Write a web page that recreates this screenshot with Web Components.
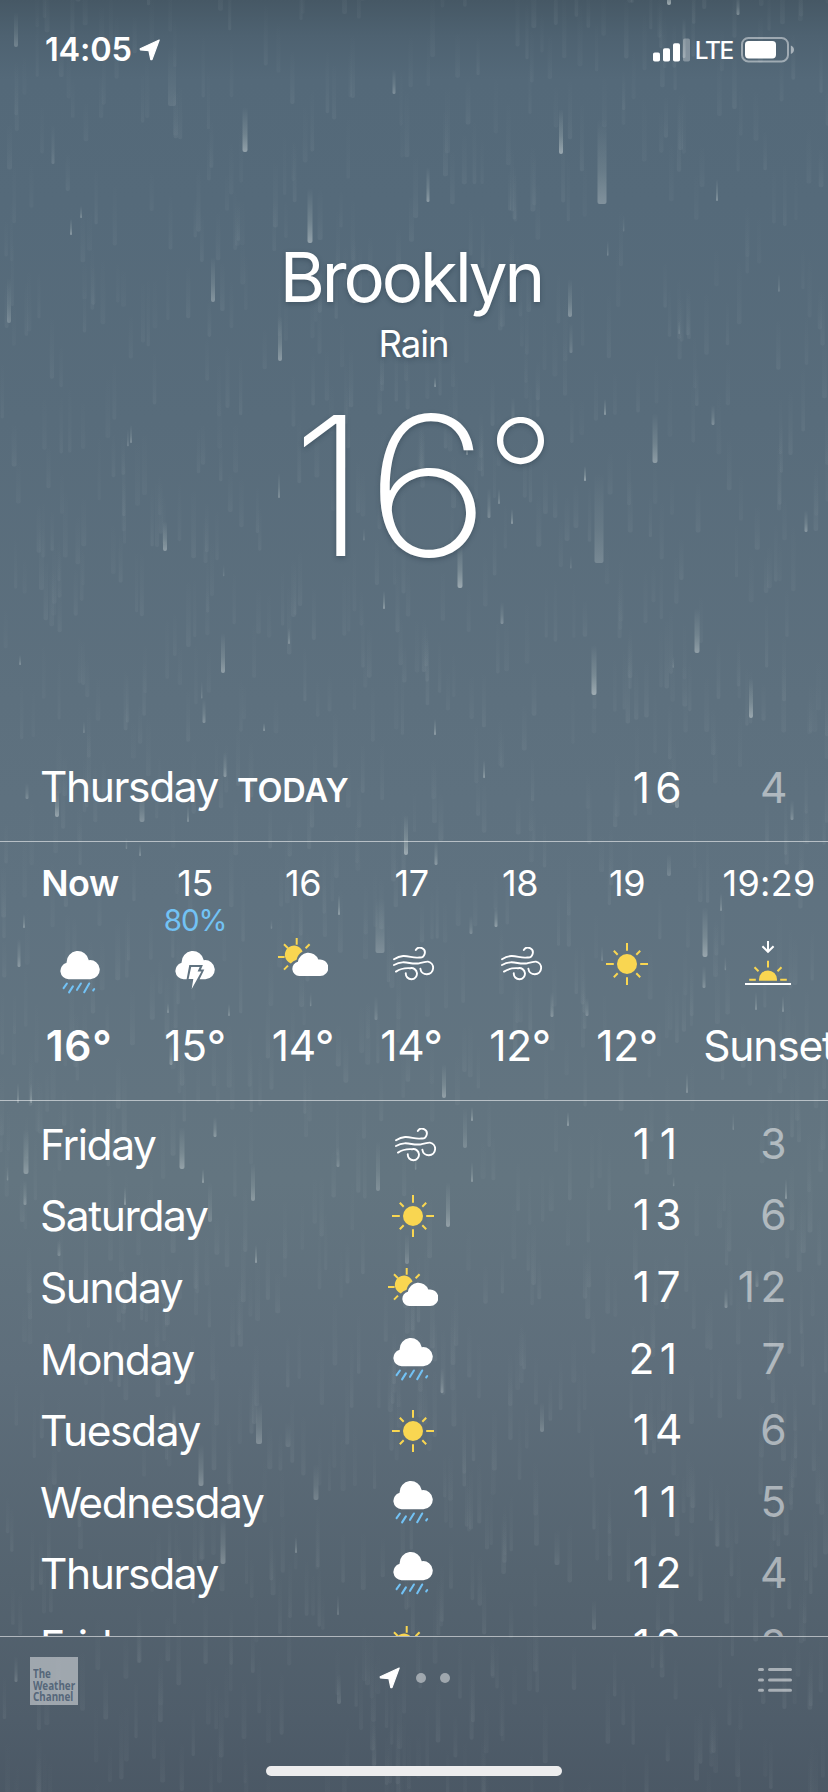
<!DOCTYPE html>
<html lang="en">
<head>
<meta charset="utf-8">
<title>Weather</title>
<style>
html,body{margin:0;padding:0;width:828px;height:1792px;overflow:hidden;background:#55697a}
</style>
</head>
<body>
<weather-app></weather-app>
<script>
const ICONS = {
  rain: `<svg width="40" height="44" viewBox="0 0 40 44"><path fill="#fff" d="M8.5 28.3a8.4 8.4 0 0 1-1.9-16.5 11.2 11.2 0 0 1 22.2-2.6 9.6 9.6 0 1 1 1.6 19.1z"/><g stroke="#72c2f5" stroke-width="2.1" stroke-linecap="round"><path d="M6.9 32.5L3.6 37.2M12.9 35.4L9.1 41.4M20.9 32.5L17 38.8M29.2 32.5L24.2 41.2M34.2 38L33.2 39.4"/></g></svg>`,
  storm: `<svg width="40" height="44" viewBox="0 0 40 44"><path fill="#fff" fill-rule="evenodd" d="M8.5 28.3a8.4 8.4 0 0 1-1.9-16.5 11.2 11.2 0 0 1 22.2-2.6 9.6 9.6 0 1 1 1.6 19.1H24.6L29.3 18.6H25.9L27.9 14H14.3L11.6 28.3z"/><path fill="#fff" d="M16.2 16H24.7L22.6 20.4H26.4L16.7 38L18.3 28H13.6z"/></svg>`,
  partly: `<svg width="50" height="40" viewBox="0 0 50 40"><path fill="#f9d651" d="M12.8 25.4A9.2 9.2 0 1 1 24.6 13.4Q19.6 16 18.6 21.8Q15 22.8 12.8 25.4z"/><g stroke="#f9d651" stroke-width="2"><path d="M18.7 0v6.8M6 6.3l4 4M31.6 6.3l-4 4M0 19.1h6.6M6 31.6l4-4"/></g><path fill="#fff" d="M21.2 38a7.2 7.2 0 0 1-1.3-14.2 10.6 10.6 0 0 1 20.4-2.2 8.3 8.3 0 1 1 1.3 16.4z"/></svg>`,
  wind: `<svg width="42" height="34" viewBox="0 0 42 34" fill="none" stroke="#fff" stroke-width="1.9" stroke-linecap="round"><path d="M1 12.2C12 5.2 18 12 26.2 10.4a4.9 4.9 0 1 0-3.4-7.5M1 18C12 12 17 18.2 26.4 16.2C32 14.6 33 14.4 35 14.6a6.4 6.4 0 1 1-7.6 7.2M3 24.6C9 20.6 13.6 21 17.2 21.2a5.6 5.6 0 1 1-4.4 5"/></svg>`,
  sun: `<svg width="42" height="42" viewBox="0 0 42 42"><circle cx="21" cy="21" r="10" fill="#f9d651"/><g stroke="#f9d651" stroke-width="2"><path d="M21 0v7.8M21 34.2V42M0 21h7.8M34.2 21H42M7.8 7.8l3.9 3.9M34.2 7.8l-3.9 3.9M7.8 34.2l3.9-3.9M34.2 34.2l-3.9-3.9"/></g></svg>`,
  sunset: `<svg width="46" height="45" viewBox="0 0 46 45"><path d="M23 0v10.6M17.4 5.2L23 10.8L28.6 5.2" fill="none" stroke="#fff" stroke-width="2"/><path fill="#f9d651" d="M14 39.7V38.4a9 9 0 0 1 18 0v1.3z"/><path stroke="#f9d651" stroke-width="2" d="M23 19.8v6.6M9.5 26.2l4 4M36.5 26.2l-4 4M4.2 38.7h6.6M35.2 38.7h6.6"/><path stroke="#fff" stroke-width="2" d="M0 43h46"/></svg>`,
  arrow: `<svg width="22" height="22" viewBox="0 0 22 22"><path fill="#fff" stroke="#fff" stroke-width="1.2" stroke-linejoin="round" d="M20.2 1L1.2 9.8 1.4 11 9.9 11.6 11.8 20.6 13 20.6z"/></svg>`
};

class WeatherIcon extends HTMLElement {
  connectedCallback() {
    this.attachShadow({mode: 'open'}).innerHTML =
      `<style>:host{display:block;line-height:0}svg{display:block}</style>${ICONS[this.getAttribute('name')]}`;
  }
}

/* x, bottom y, length, width, opacity */
const DROPS = [[16,47,35,4,.25],[172,106,60,8,.1],[53,164,40,3,.15],[245,152,45,5,.45],[394,94,25,3,.3],[561,154,45,4,.5],[602,204,85,9,.32],[428,202,35,3,.4],[717,201,22,2,.35],[310,243,55,5,.45],[669,5,20,4,.6],[738,15,20,3,.35],[684,58,40,3,.3],[81,218,12,1.5,.4],[71,235,16,2,.4],[570,317,38,4,.35],[571,353,30,3,.2],[280,361,45,4,.4],[213,302,45,4,.35],[9,323,45,4,.25],[460,588,45,5,.5],[467,455,15,2,.35],[489,518,30,3,.25],[499,504,15,2,.3],[512,524,15,2,.4],[279,498,25,2,.3],[585,481,15,2,.5],[435,387,10,1.5,.5],[599,563,90,9,.22],[655,463,50,5,.4],[594,695,50,5,.5],[697,653,45,5,.4],[751,718,40,4,.45],[223,673,40,4,.4],[165,551,30,4,.4],[513,427,30,3,.2],[131,443,18,2,.3],[605,415,16,2,.4],[384,609,18,2,.4],[502,624,22,3,.3],[289,644,16,2,.3],[806,532,22,3,.35],[713,425,20,3,.3],[20,665,10,1.5,.4],[204,723,24,3,.3],[435,735,16,2,.4],[264,731,8,1.5,.5],[57,817,28,4,.45],[142,822,30,5,.3],[188,822,16,2,.3],[225,777,25,3,.35],[27,799,16,3,.25],[406,855,40,4,.5],[380,953,55,9,.25],[19,967,28,3,.35],[24,928,14,2,.35],[339,915,20,2,.4],[140,856,12,1.5,.4],[171,1065,25,3,.3],[229,1016,12,2,.3],[168,1013,10,2,.3],[376,1020,24,3,.2],[436,865,24,3,.35],[496,927,20,3,.4],[471,934,18,3,.25],[705,957,50,5,.45],[704,988,22,3,.3],[444,1098,34,4,.4],[677,808,30,4,.3],[484,778,18,1.5,.5],[792,820,20,3,.3],[687,1093,20,2,.3],[669,876,22,4,.2],[721,911,18,2,.3],[783,1012,16,2,.3],[756,1010,18,2,.3],[587,1016,18,3,.25],[552,1017,25,3,.3],[18,1103,20,2,.3],[31,1103,20,1.5,.4],[26,1174,45,5,.35],[25,1205,25,3,.3],[182,1169,42,5,.4],[203,1183,14,2,.4],[215,1137,20,3,.35],[253,1201,38,4,.35],[210,1222,40,4,.2],[378,1191,50,4,.25],[448,1227,45,4,.4],[407,1264,30,4,.25],[465,1148,40,4,.22],[472,1121,14,2,.4],[472,1182,20,2,.35],[256,1263,18,2,.4],[125,1205,18,2,.35],[59,1256,16,3,.25],[442,1393,25,3,.3],[338,1167,20,3,.25],[568,1126,14,2,.4],[786,1199,20,2,.35],[726,1308,20,3,.3],[757,1287,18,3,.2],[259,1444,42,6,.3],[201,1486,42,5,.32],[316,1500,36,5,.22],[223,1564,48,5,.3],[288,1447,25,5,.12],[174,1430,26,3,.25],[296,1553,16,2,.3],[542,1432,30,4,.25],[557,1565,36,5,.1],[594,1630,30,4,.15],[338,1615,20,2,.2],[339,1704,30,4,.15],[16,1682,26,3,.2]];

class RainSky extends HTMLElement {
  connectedCallback() {
    let s = 20190411;
    const rnd = () => (s = (s * 1664525 + 1013904223) >>> 0) / 4294967296;
    let out = '';
    const drop = (x, b, l, w, o) => {
      out += `<rect x="${(x - w / 2).toFixed(1)}" y="${(b - l).toFixed(1)}" width="${w}" height="${l}" rx="${Math.min(w / 2, 2)}" fill="url(#d)" opacity="${o}"/>`;
    };
    for (let i = 0; i < 1400; i++)
      drop(rnd() * 828, rnd() * 1850, 38 + rnd() * 34, +(3 + rnd() * 2).toFixed(1), (0.025 + rnd() * 0.04).toFixed(3));
    for (let i = 0; i < 20; i++)
      drop(rnd() * 828, rnd() * 1450, 8 + rnd() * 10, 1.5, (0.15 + rnd() * 0.12).toFixed(2));
    DROPS.forEach(d => drop(...d));
    this.attachShadow({mode: 'open'}).innerHTML = `
<style>
:host{display:block;background:linear-gradient(#465865 0,#4e6271 36px,#546979 80px,#556a7a 200px,#586c7b 420px,#5d707e 700px,#5f7280 900px,#627480 1100px,#637580 1180px,#5e6e7b 1370px,#54636f 1590px,#4f5d6a 1720px,#4b5865 1792px)}
svg{display:block}
</style>
<svg width="828" height="1792" viewBox="0 0 828 1792"><defs><linearGradient id="d" x1="0" y1="0" x2="0" y2="1"><stop offset="0" stop-color="#c8d5d2" stop-opacity="0"/><stop offset=".6" stop-color="#c8d5d2" stop-opacity=".5"/><stop offset="1" stop-color="#dfe6e6"/></linearGradient></defs>${out}</svg>`;
  }
}

class StatusBar extends HTMLElement {
  connectedCallback() {
    this.attachShadow({mode: 'open'}).innerHTML = `
<style>
:host{display:flex;align-items:center;height:40px;padding:30px 34px 0 45px}
.time{font-size:32.5px;font-weight:580;letter-spacing:-.2px;line-height:40px;width:88px;white-space:nowrap}
weather-icon{margin-left:6px}
.sig{margin-left:auto}
.lte{font-size:24.4px;font-weight:500;letter-spacing:-1.3px;line-height:40px;margin:0 8px 0 5px}
svg{display:block}
</style>
<span class="time">14:05</span><weather-icon name="arrow"></weather-icon>
<svg class="sig" width="37" height="24" viewBox="0 0 37 24"><g fill="#fff"><rect y="14.5" width="7" height="9" rx="1.8"/><rect x="10" y="10.2" width="7" height="13.3" rx="1.8"/><rect x="20" y="5.2" width="7" height="18.3" rx="1.8"/><rect x="30" y=".5" width="7" height="23" rx="1.8" opacity=".3"/></g></svg>
<span class="lte">LTE</span>
<svg width="53" height="26" viewBox="0 0 53 26"><rect x="1" y="1" width="46" height="23.4" rx="6.4" fill="none" stroke="#fff" stroke-opacity=".45" stroke-width="2"/><rect x="4" y="4" width="31" height="17.4" rx="3.6" fill="#fff"/><path d="M49.8 8.4q3.2 1.4 3.2 4.3t-3.2 4.3z" fill="#fff" fill-opacity=".5"/></svg>`;
  }
}

class CurrentConditions extends HTMLElement {
  connectedCallback() {
    const [a, b, c] = this.getAttribute('temp');
    this.attachShadow({mode: 'open'}).innerHTML = `
<style>
:host{display:flex;flex-direction:column;align-items:center;height:675px;padding-top:167px;box-sizing:border-box;text-shadow:0 2px 5px rgba(30,45,60,.35)}
.city{font-size:69px;line-height:80px;letter-spacing:-3.1px;padding-right:6px}
.cond{font-size:36.5px;line-height:44px;margin-top:5px;letter-spacing:-1.1px;padding-right:1px}
.temp{font-size:194px;line-height:220px;font-weight:200;margin-top:10px;letter-spacing:-6px;padding-left:13px;white-space:nowrap}
.temp span{display:inline-block}
.b{transform:scaleX(1.1);margin:0 8px 0 11px}
.c{font-size:153px;line-height:1;font-weight:245;position:relative;top:-26px}
</style>
<div class="city"><slot name="city"></slot></div><div class="cond"><slot name="condition"></slot></div><div class="temp"><span>${a}</span><span class="b">${b}</span><span class="c">${c}</span></div>`;
  }
}

class DayRow extends HTMLElement {
  connectedCallback() {
    const a = n => this.getAttribute(n);
    const cells = n => [...a(n)].map(d => `<span>${d}</span>`).join('');
    this.attachShadow({mode: 'open'}).innerHTML = `
<style>
:host{display:grid;grid-template-columns:339px 150px 153px 105px;padding-left:40px;align-items:center;height:71.6px;font-size:42.5px;line-height:52px;box-sizing:border-box}
.name{white-space:nowrap;letter-spacing:-1.4px;display:flex;align-items:baseline}
.today{font-size:32.5px;font-weight:600;letter-spacing:-.1px;margin-left:19px}
.hi,.lo{display:flex;justify-content:flex-end;position:relative;top:-1px}
.hi span,.lo span{width:27px;text-align:center}
.lo{opacity:.5}
.ic{display:flex;justify-content:center;padding-right:82px}
[name=wind]{position:relative;left:3px}
</style>
<div class="name"><span>${a('day')}</span>${this.hasAttribute('today') ? '<span class="today">TODAY</span>' : ''}</div>
<div class="ic">${a('icon') ? `<weather-icon name="${a('icon')}"></weather-icon>` : ''}</div>
<div class="hi">${cells('hi')}</div><div class="lo">${cells('lo')}</div>`;
  }
}

class HourCell extends HTMLElement {
  connectedCallback() {
    const a = n => this.getAttribute(n);
    this.attachShadow({mode: 'open'}).innerHTML = `
<style>
:host{display:grid;grid-template-rows:43px 30px 76px 1fr;justify-items:center;height:258px;padding-top:20px;box-sizing:border-box;white-space:nowrap}
:host([now]){font-weight:600}
.t{font-size:36px;line-height:43px;letter-spacing:-.5px}
:host([time="19:29"]) .t{letter-spacing:.3px;padding-left:2px}
.p{font-size:29.5px;line-height:30px;color:#72c2f5;letter-spacing:-1.1px}
.ic{display:grid;justify-items:center;align-items:start;padding-top:16px}
.ic.partly{padding-top:3px}
.ic.wind{padding:12px 0 0 4px}
.ic.sun{padding-top:8px}
.ic.sunset{padding-top:6px}
.d{font-size:42.5px;line-height:52px;letter-spacing:-.3px;margin-top:9px}
:host([now]) .d{letter-spacing:.6px;padding-right:2px}
:host([temp="Sunset"]) .d{letter-spacing:-1.2px;padding-left:2px}
</style>
<div class="t">${a('time')}</div><div class="p">${a('chance') || ''}</div>
<div class="ic ${a('icon')}"><weather-icon name="${a('icon')}"></weather-icon></div><div class="d">${a('temp')}</div>`;
  }
}

class HourlyStrip extends HTMLElement {
  connectedCallback() {
    this.attachShadow({mode: 'open'}).innerHTML = `
<style>
:host{display:grid;grid-template-columns:120px 110px 106px 111px 106px 108px 174px;padding-left:20px;height:258px;border-top:1px solid rgba(255,255,255,.55);border-bottom:1px solid rgba(255,255,255,.55);overflow:hidden;box-sizing:content-box}
</style><slot></slot>`;
  }
}

class ForecastList extends HTMLElement {
  connectedCallback() {
    this.attachShadow({mode: 'open'}).innerHTML = `
<style>:host{display:block;height:527px;padding-top:8px;overflow:hidden;box-sizing:content-box}</style><slot></slot>`;
  }
}

class BottomBar extends HTMLElement {
  connectedCallback() {
    this.attachShadow({mode: 'open'}).innerHTML = `
<style>
:host{display:flex;flex-direction:column;align-items:center;height:155px;border-top:1px solid rgba(255,255,255,.55)}
.row{display:grid;grid-template-columns:1fr auto 1fr;align-items:start;width:100%;height:129px;padding:20px 36px 0 30px;box-sizing:border-box}
.logo{width:48px;height:48px;box-sizing:border-box;background:rgba(255,255,255,.45);color:#56677a;font:700 11.6px/11.3px "Noto Sans","Open Sans",sans-serif;padding:11.4px 0 0 3px}
.logo div{transform:scaleX(.85);transform-origin:0 0}
.pages{display:flex;align-items:center;padding:10px 0 0 7px}
.dot{width:10px;height:10px;border-radius:50%;background:rgba(255,255,255,.45);margin-left:14px}
.dot:first-of-type{margin-left:15px}
.menu{justify-self:end;padding-top:11px}
svg{display:block}
.home{width:296px;height:10px;border-radius:5px;background:#ededee}
</style>
<div class="row"><div class="logo"><div>The<br>Weather<br>Channel</div></div>
<div class="pages"><weather-icon name="arrow"></weather-icon><i class="dot"></i><i class="dot"></i></div>
<svg class="menu" width="34" height="24" viewBox="0 0 34 24"><g stroke="#fff" stroke-opacity=".5" stroke-width="3" stroke-linecap="round"><path d="M1.5 1.5h3M11.5 1.5h21M1.5 12h3M11.5 12h21M1.5 22.3h3M11.5 22.3h21"/></g></svg></div>
<div class="home"></div>`;
  }
}

class WeatherApp extends HTMLElement {
  connectedCallback() {
    this.attachShadow({mode: 'open'}).innerHTML = `
<style>
:host{display:grid;width:828px;height:1792px;overflow:hidden;color:#fff;font-family:Inter,"Liberation Sans",sans-serif}
rain-sky,main{grid-area:1/1;min-width:0}
main{display:flex;flex-direction:column;width:828px;overflow:hidden}
.today{height:96px;display:block;flex:none;box-sizing:border-box;padding-top:8px}
</style>
<rain-sky></rain-sky>
<main>
<status-bar></status-bar>
<current-conditions temp="16°"><span slot="city">Brooklyn</span><span slot="condition">Rain</span></current-conditions>
<div class="today"><day-row today day="Thursday" hi="16" lo="4"></day-row></div>
<hourly-strip>
<hour-cell now time="Now" icon="rain" temp="16°"></hour-cell>
<hour-cell time="15" chance="80%" icon="storm" temp="15°"></hour-cell>
<hour-cell time="16" icon="partly" temp="14°"></hour-cell>
<hour-cell time="17" icon="wind" temp="14°"></hour-cell>
<hour-cell time="18" icon="wind" temp="12°"></hour-cell>
<hour-cell time="19" icon="sun" temp="12°"></hour-cell>
<hour-cell time="19:29" icon="sunset" temp="Sunset"></hour-cell>
</hourly-strip>
<forecast-list>
<day-row day="Friday" icon="wind" hi="11" lo="3"></day-row>
<day-row day="Saturday" icon="sun" hi="13" lo="6"></day-row>
<day-row day="Sunday" icon="partly" hi="17" lo="12"></day-row>
<day-row day="Monday" icon="rain" hi="21" lo="7"></day-row>
<day-row day="Tuesday" icon="sun" hi="14" lo="6"></day-row>
<day-row day="Wednesday" icon="rain" hi="11" lo="5"></day-row>
<day-row day="Thursday" icon="rain" hi="12" lo="4"></day-row>
<day-row day="Friday" icon="partly" hi="12" lo="2"></day-row>
</forecast-list>
<bottom-bar></bottom-bar>
</main>`;
  }
}

Object.entries({
  'weather-icon': WeatherIcon, 'rain-sky': RainSky, 'status-bar': StatusBar,
  'current-conditions': CurrentConditions, 'day-row': DayRow, 'hour-cell': HourCell,
  'hourly-strip': HourlyStrip, 'forecast-list': ForecastList, 'bottom-bar': BottomBar,
  'weather-app': WeatherApp
}).forEach(([n, c]) => customElements.define(n, c));
</script>
</body>
</html>
